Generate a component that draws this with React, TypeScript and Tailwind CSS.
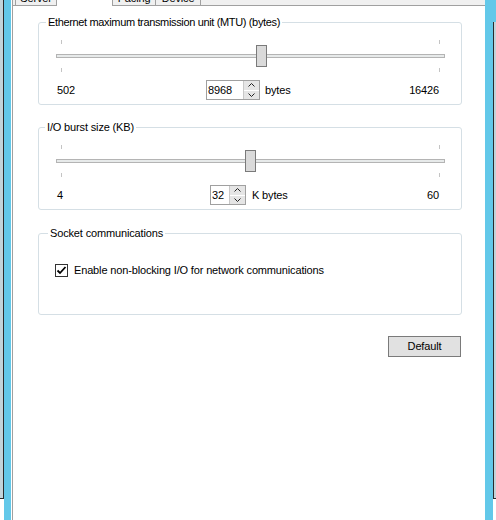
import React from 'react';

type TrackProps = { min: number; max: number; value: number };

const Ticks = () => (
  <div className="flex justify-between px-[5px] h-[4px]">
    <span className="w-px h-full bg-[#c4c4c4]" />
    <span className="w-px h-full bg-[#c4c4c4]" />
  </div>
);

const TrackBar: React.FC<TrackProps> = ({ min, max, value }) => {
  // tick span is 378px, thumb is 11px wide
  const left = Math.round(5 + ((value - min) / (max - min)) * 378 - 5.5);
  return (
    <div className="relative ml-[17px] w-[389px]">
      <Ticks />
      <div className="mt-[10px] h-[4px] border border-[#b4b4b4] bg-[#e7eaea]" />
      <div className="mt-[10px]">
        <Ticks />
      </div>
      <div
        className="absolute top-[5px] h-[22px] w-[11px] bg-[#dadada] border border-[#7a7a7a]"
        style={{ left }}
      />
    </div>
  );
};

const Chevron = ({ up }: { up?: boolean }) => (
  <svg width="7" height="4" viewBox="0 0 7 4" className="block">
    <path
      d={up ? 'M0.5 3.5 L3.5 0.5 L6.5 3.5' : 'M0.5 0.5 L3.5 3.5 L6.5 0.5'}
      fill="none"
      stroke="#222"
      strokeWidth="1"
    />
  </svg>
);

const SpinBox = ({ value, inputClass }: { value: string; inputClass: string }) => (
  <div className="flex h-[20px] border border-[#a0a0a0] bg-white">
    <div className={`${inputClass} pl-[1px] flex items-center leading-none`}>{value}</div>
    <div className="w-[16px] flex flex-col gap-px bg-white border-l border-[#c8c8c8]">
      <div className="flex-1 bg-[#e5e5e5] flex items-center justify-center">
        <Chevron up />
      </div>
      <div className="flex-1 bg-[#e5e5e5] flex items-center justify-center">
        <Chevron />
      </div>
    </div>
  </div>
);

const GroupBox = ({
  title,
  titleClass,
  className,
  children,
}: {
  title: string;
  titleClass: string;
  className?: string;
  children: React.ReactNode;
}) => (
  <div className={`relative border border-[#d5dfe5] rounded-[3px] ${className ?? ''}`}>
    <span className={`absolute -top-[7px] bg-white px-[2px] leading-[13px] whitespace-nowrap ${titleClass}`}>
      {title}
    </span>
    {children}
  </div>
);

const Tab = ({ label, className }: { label: string; className: string }) => (
  <div className={`h-full overflow-hidden border-[#a0a0a0] ${className}`}>
    <div className="-mt-[8px] leading-[13px] text-center whitespace-nowrap">{label}</div>
  </div>
);

export default function App() {
  return (
    <div className="w-[496px] h-[520px] flex bg-white overflow-hidden font-['Liberation_Sans',Arial,sans-serif] text-[11px] tracking-[-0.15px] text-black">
      {/* window chrome, left */}
      <div className="w-[4px] flex flex-col">
        <div className="h-[498px] bg-[#c3d3d9] border-r border-[#2b2b2b]" />
        <div className="h-px bg-[#2b2b2b]" />
        <div className="flex-1 bg-white" />
      </div>
      <div className="w-[7px] bg-[#63c8e9]" />
      <div className="w-px bg-white" />

      {/* tab page */}
      <div className="flex-1 flex flex-col border-l border-[#a0a0a0]">
        <div className="h-[6px] flex">
          <div className="w-[2px] border-b border-[#a0a0a0] bg-[#f0f0f0]" />
          <Tab label="Server" className="w-[41px] border-l border-b bg-[#f0f0f0]" />
          <Tab label="" className="w-[57px] border-x bg-white" />
          <Tab label="Pacing" className="w-[43px] border-r border-b bg-[#f0f0f0]" />
          <Tab label="Device" className="w-[45px] border-r border-b bg-[#f0f0f0]" />
          <div className="flex-1 border-b border-[#a0a0a0] bg-[#f0f0f0]" />
        </div>

        <div className="pt-[16px] pl-[25px] pr-[23px] flex flex-col">
          <GroupBox
            title="Ethernet maximum transmission unit (MTU) (bytes)"
            titleClass="left-[7px] tracking-[-0.35px]"
          >
            <div className="pt-[17px] pb-[4px]">
              <TrackBar min={502} max={16426} value={8968} />
              <div className="mt-[8px] h-[20px] flex items-center pl-[18px] pr-[22px]">
                <span className="w-[149px]">502</span>
                <SpinBox value="8968" inputClass="w-[36px]" />
                <span className="ml-[5px]">bytes</span>
                <span className="ml-auto">16426</span>
              </div>
            </div>
          </GroupBox>

          <GroupBox title="I/O burst size (KB)" titleClass="left-[6px]" className="mt-[22px]">
            <div className="pt-[17px] pb-[4px]">
              <TrackBar min={4} max={60} value={32} />
              <div className="mt-[8px] h-[20px] flex items-center pl-[18px] pr-[22px]">
                <span className="w-[153px]">4</span>
                <SpinBox value="32" inputClass="w-[18px]" />
                <span className="ml-[6px]">K bytes</span>
                <span className="ml-auto">60</span>
              </div>
            </div>
          </GroupBox>

          <GroupBox title="Socket communications" titleClass="left-[9px]" className="mt-[23px]">
            <div className="pt-[30px] pb-[37px] pl-[16px] flex items-center">
              <div className="w-[13px] h-[13px] border border-[#333] bg-white flex items-center justify-center">
                <svg width="11" height="11" viewBox="0 0 11 11" className="block">
                  <path d="M1.5 5.5 L4 8 L9.5 2" fill="none" stroke="#000" strokeWidth="1.8" />
                </svg>
              </div>
              <span className="ml-[6px] leading-[13px]">Enable non-blocking I/O for network communications</span>
            </div>
          </GroupBox>

          <button className="self-end mr-[1px] mt-[21px] w-[73px] h-[21px] bg-[#e1e1e1] border border-[#7a7a7a] leading-none">
            Default
          </button>
        </div>
      </div>

      {/* window chrome, right */}
      <div className="w-[8px] bg-[#63c8e9]" />
      <div className="w-[3px] flex flex-col">
        <div className="h-[22px] bg-[#63c8e9]" />
        <div className="h-[476px] bg-[#c3d3d9] border-l border-[#2b2b2b]" />
        <div className="h-px bg-[#2b2b2b]" />
        <div className="flex-1 bg-white" />
      </div>
    </div>
  );
}
